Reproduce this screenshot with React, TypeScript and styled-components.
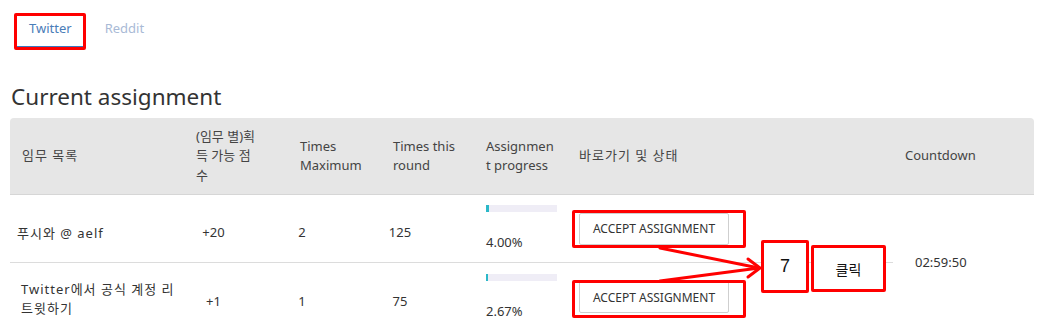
import React from 'react';
import styled, { createGlobalStyle } from 'styled-components';

const GlobalStyle = createGlobalStyle`
  body {
    margin: 0;
    background: #fff;
    font-family: "Noto Sans", "Noto Sans CJK KR", sans-serif;
    color: #333;
  }
`;

const tasks = [
  { name: '푸시와 @ aelf', indent: 7, offset: 9, points: '+20', max: '2', round: '125', progress: 4.0 },
  { name: 'Twitter에서 공식 계정 리트윗하기', indent: 11, offset: 4, points: '+1', max: '1', round: '75', progress: 2.67 },
];

const COLS = '174px 104px 93px 93px 93px 326px 1fr';

function App() {
  return (
    <Page>
      <GlobalStyle />
      <TabBar>
        <Tab $active>Twitter</Tab>
        <Tab>Reddit</Tab>
      </TabBar>
      <Heading>Current assignment</Heading>
      <Table>
        <HeadRow>
          <HeadCell>
            <HeadText $ko>임무 목록</HeadText>
          </HeadCell>
          <HeadCell>
            <HeadText $w={64} $breakAll>(임무 별)획득 가능 점수</HeadText>
          </HeadCell>
          <HeadCell>
            <HeadText $w={70}>Times Maximum</HeadText>
          </HeadCell>
          <HeadCell>
            <HeadText $w={70}>Times this round</HeadText>
          </HeadCell>
          <HeadCell>
            <HeadText $w={68} $breakAll>Assignment progress</HeadText>
          </HeadCell>
          <HeadCell>
            <HeadText $ko>바로가기 및 상태</HeadText>
          </HeadCell>
          <HeadCell>
            <HeadText>Countdown</HeadText>
          </HeadCell>
        </HeadRow>
        <Body>
          {tasks.map((t, i) => (
            <React.Fragment key={t.name}>
              <NameCell $line={i === 0} $indent={t.indent} $offset={t.offset}>
                <NameText>{t.name}</NameText>
              </NameCell>
              <DataCell $line={i === 0}>
                <Centered $w={59}>{t.points}</Centered>
              </DataCell>
              <DataCell $line={i === 0}>
                <Centered $w={28}>{t.max}</Centered>
              </DataCell>
              <DataCell $line={i === 0}>
                <Centered $w={38}>{t.round}</Centered>
              </DataCell>
              <ProgressCell $line={i === 0}>
                <Bar>
                  <Fill style={{ width: Math.max(2, Math.round((71 * t.progress) / 100)) }} />
                </Bar>
                <Percent>{t.progress.toFixed(2)}%</Percent>
              </ProgressCell>
              <ActionCell $line={i === 0}>
                <AcceptButton>Accept assignment</AcceptButton>
              </ActionCell>
            </React.Fragment>
          ))}
          <CountdownCell>02:59:50</CountdownCell>
        </Body>
      </Table>

      <RedBox $x={14} $y={13} $w={72} $h={37} />
      <RedBox $x={572} $y={210} $w={174} $h={38} />
      <RedBox $x={572} $y={280} $w={174} $h={38} />
      <Arrows width="1040" height="330" viewBox="0 0 1040 330">
        <g stroke="#f00" strokeWidth="3" fill="none" strokeLinecap="round" strokeLinejoin="round">
          <line x1="660" y1="248" x2="759" y2="268" />
          <line x1="660" y1="281" x2="759" y2="268" />
          <polyline points="748,259 760,268 748,277" />
        </g>
      </Arrows>
      <NoteBox $x={761} $y={240} $w={48} $h={53}>
        <StepNumber>7</StepNumber>
      </NoteBox>
      <NoteBox $x={811} $y={245} $w={75} $h={47}>
        <NoteText>클릭</NoteText>
      </NoteBox>
    </Page>
  );
}

const Page = styled.div`
  position: relative;
  width: 1040px;
  height: 330px;
  padding: 0 6px 0 10px;
  box-sizing: border-box;
  overflow: hidden;
`;

const TabBar = styled.div`
  display: flex;
  gap: 7px;
  padding-left: 6px;
`;

const Tab = styled.div<{ $active?: boolean }>`
  padding: 19px 13px 9px;
  font-size: 13px;
  line-height: 18px;
  color: ${(p) => (p.$active ? '#4a7db8' : '#a9bad6')};
  border-bottom: 3px solid ${(p) => (p.$active ? '#3b78bf' : 'transparent')};
`;

const Heading = styled.h2`
  margin: 33px 0 6px 1px;
  font-size: 22.5px;
  line-height: 30px;
  font-weight: 400;
  color: #333;
`;

const Table = styled.div`
  width: 1024px;
`;

const HeadRow = styled.div`
  display: grid;
  grid-template-columns: ${COLS};
  height: 77px;
  background: #e6e6e6;
  border-radius: 4px 4px 0 0;
  border-bottom: 1px solid #d6d6d6;
  box-sizing: border-box;
`;

const HeadCell = styled.div`
  display: flex;
  align-items: center;
  padding-left: 12px;
  font-size: 13px;
  line-height: 19.5px;
  color: #444;
`;

const HeadText = styled.span<{ $w?: number; $ko?: boolean; $breakAll?: boolean }>`
  width: ${(p) => (p.$w ? `${p.$w}px` : 'auto')};
  letter-spacing: ${(p) => (p.$ko ? '1px' : 'normal')};
  word-break: ${(p) => (p.$breakAll ? 'break-all' : 'normal')};
`;

const Body = styled.div`
  display: grid;
  grid-template-columns: ${COLS};
  grid-template-rows: 68px 68px;
`;

const Cell = styled.div<{ $line?: boolean }>`
  display: flex;
  align-items: center;
  font-size: 13px;
  color: #333;
  border-bottom: ${(p) => (p.$line ? '1px solid #dcdcdc' : 'none')};
  box-sizing: border-box;
`;

const NameCell = styled(Cell)<{ $indent: number; $offset: number }>`
  padding: ${(p) => p.$offset}px 8px 0 ${(p) => p.$indent}px;
`;

const NameText = styled.span`
  line-height: 19px;
  letter-spacing: 1px;
`;

const DataCell = styled(Cell)`
  padding-top: 7px;
`;

const Centered = styled.span<{ $w: number }>`
  width: ${(p) => p.$w}px;
  text-align: center;
`;

const ProgressCell = styled(Cell)`
  flex-direction: column;
  align-items: flex-start;
  justify-content: center;
  gap: 20px;
  padding: 0 0 0 12px;
`;

const Bar = styled.div`
  width: 71px;
  height: 7px;
  background: #efedf6;
`;

const Fill = styled.div`
  height: 100%;
  background: #2bb8c8;
`;

const Percent = styled.span`
  line-height: 20px;
`;

const ActionCell = styled(Cell)`
  padding-left: 12px;
`;

const AcceptButton = styled.button`
  width: 150px;
  height: 32px;
  border: 1px solid #cfcfcf;
  border-radius: 2px;
  background: #fff;
  font-family: inherit;
  font-size: 12px;
  color: #333;
  text-transform: uppercase;
  padding: 0;
`;

const CountdownCell = styled(Cell)`
  grid-column: 7;
  grid-row: 1 / span 2;
  padding-left: 22px;
  padding-bottom: 2px;
`;

const RedBox = styled.div<{ $x: number; $y: number; $w: number; $h: number }>`
  position: absolute;
  left: ${(p) => p.$x}px;
  top: ${(p) => p.$y}px;
  width: ${(p) => p.$w}px;
  height: ${(p) => p.$h}px;
  border: 3px solid #f00;
  border-radius: 2px;
  box-sizing: border-box;
  pointer-events: none;
`;

const NoteBox = styled(RedBox)`
  display: flex;
  align-items: center;
  justify-content: center;
  background: #fff;
`;

const StepNumber = styled.span`
  font-family: "Liberation Sans", "Noto Sans CJK KR", sans-serif;
  font-size: 18px;
  color: #111;
`;

const NoteText = styled.span`
  font-size: 14px;
  color: #111;
`;

const Arrows = styled.svg`
  position: absolute;
  left: 0;
  top: 0;
  pointer-events: none;
`;

export default App;
